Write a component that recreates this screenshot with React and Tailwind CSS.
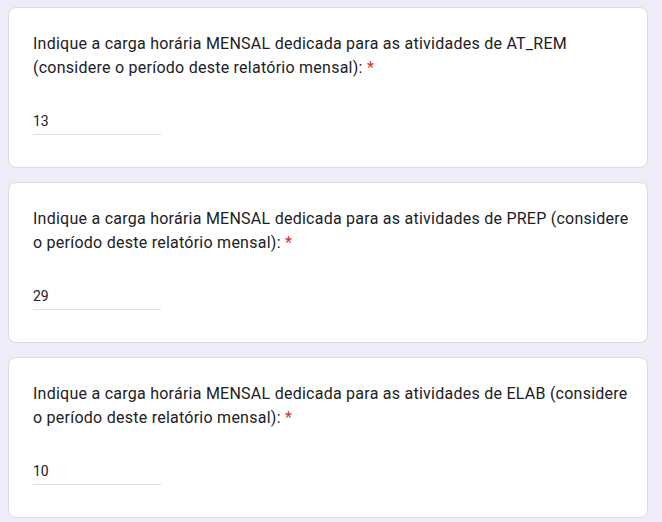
const questions = [
  { id: 1, label: "AT_REM", value: "13" },
  { id: 2, label: "PREP", value: "29" },
  { id: 3, label: "ELAB", value: "10" },
];

function QuestionCard({ label, value }) {
  return (
    <div className="w-[640px] bg-white border border-[#dadce0] rounded-lg pt-6 pl-6 pr-3 pb-8">
      <p className="text-[16px] leading-6 text-[#202124] tracking-[0.25px]">
        Indique a carga horária MENSAL dedicada para as atividades de {label} (considere o período deste relatório mensal):{" "}
        <span className="text-[#d93025]">*</span>
      </p>
      <div className="mt-[31px] w-[128px] border-b border-[#e0e0e0] pb-[3px]">
        <span className="block text-[14px] leading-5 text-[#202124]">{value}</span>
      </div>
    </div>
  );
}

export default function App() {
  return (
    <div
      className="min-h-screen bg-[#f0ebf8] pl-2 pt-[7px] flex flex-col gap-[14px]"
      style={{ fontFamily: "Roboto, 'Noto Sans', Arial, sans-serif" }}
    >
      {questions.map((q) => (
        <QuestionCard key={q.id} label={q.label} value={q.value} />
      ))}
    </div>
  );
}
